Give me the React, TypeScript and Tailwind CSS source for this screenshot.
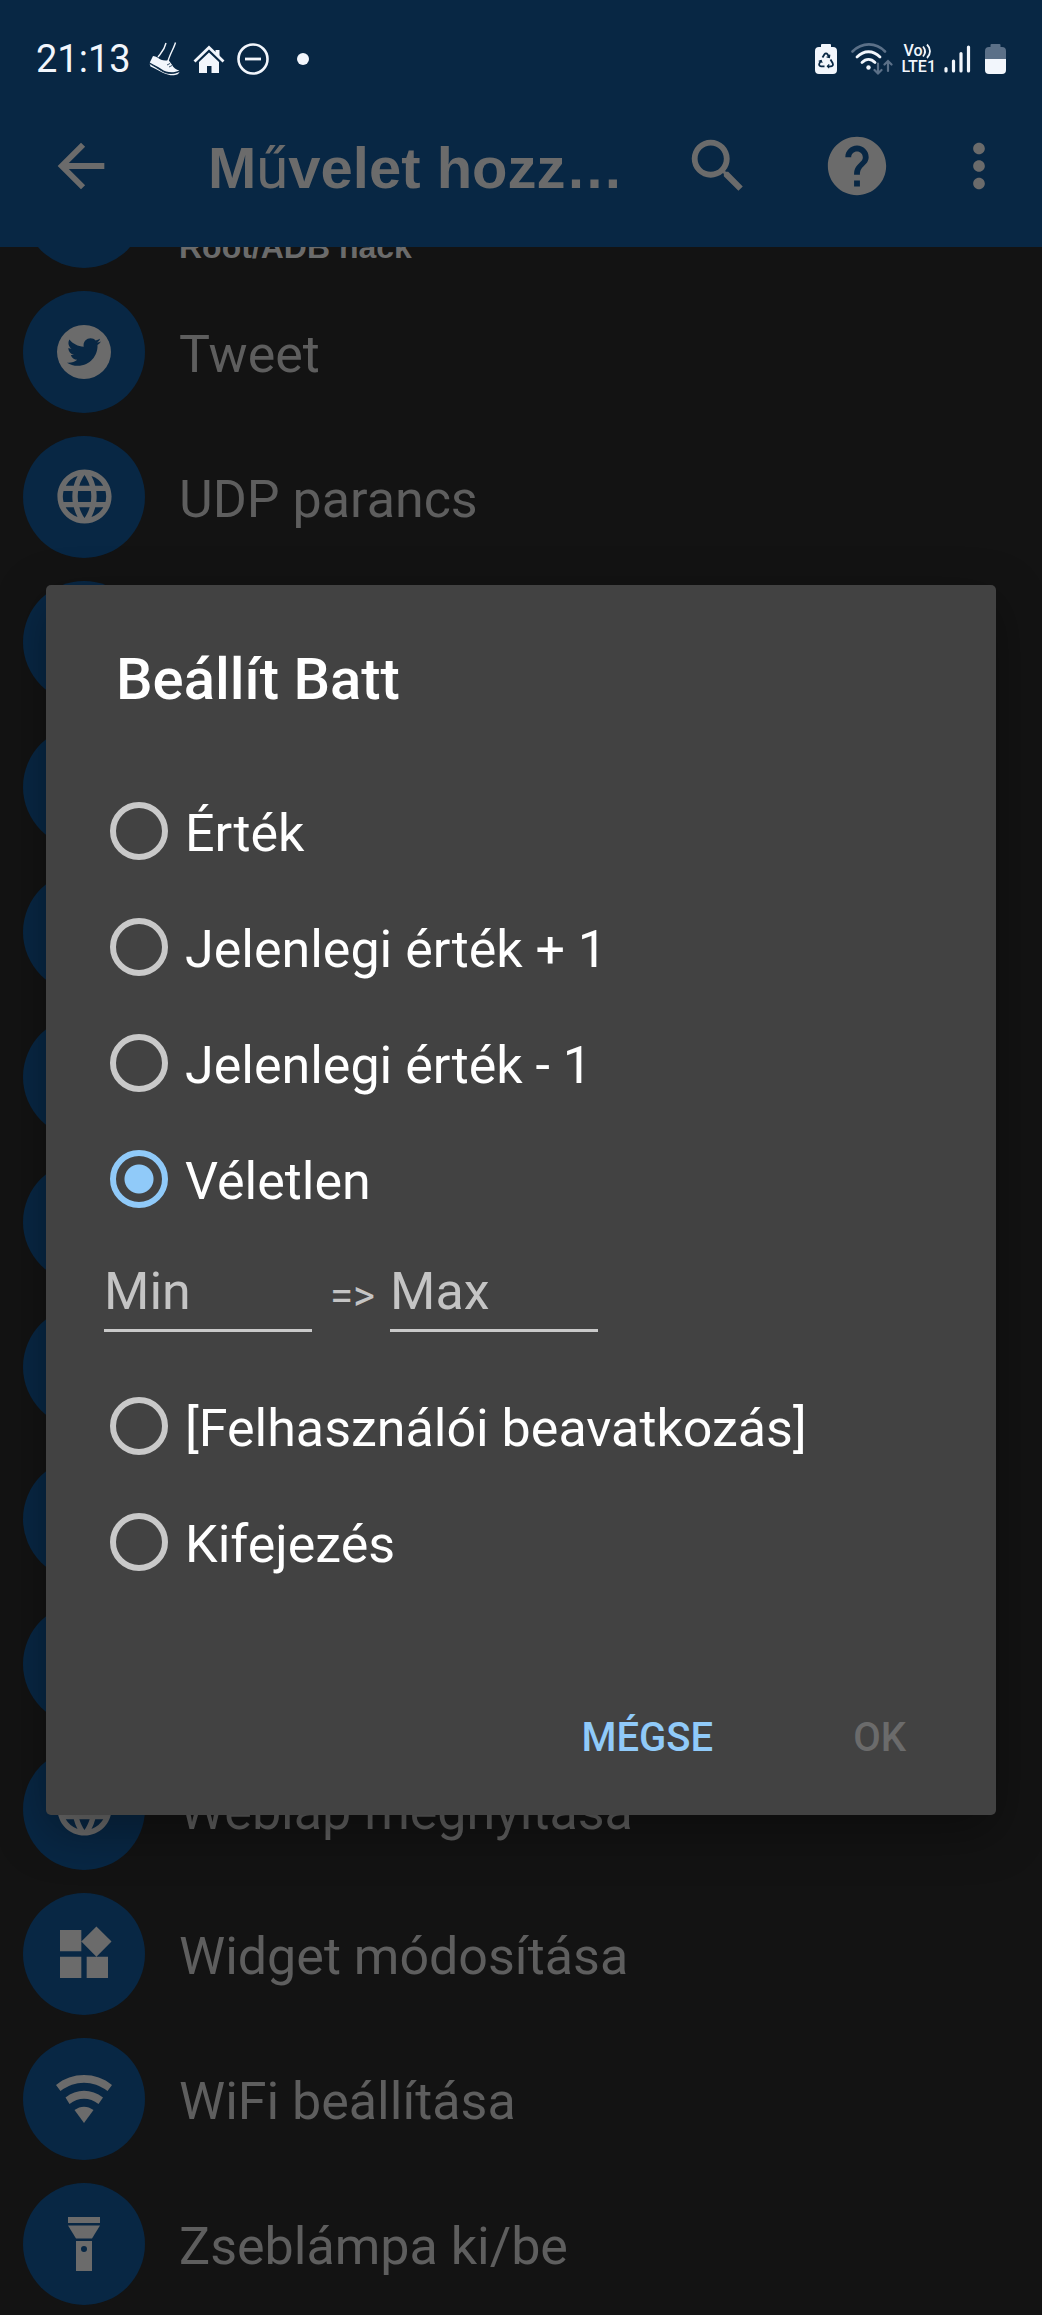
import { useState } from 'react';
import type { ReactNode } from 'react';
import { FaTwitter } from 'react-icons/fa';
import { MdArrowBack, MdHelp, MdLanguage, MdMoreVert, MdSearch, MdWidgets } from 'react-icons/md';

function ShoeIcon() {
  return (
    <svg className="h-[34px] w-8" viewBox="0 0 32 34" fill="none">
      <path d="M17 1C15.500 8 13 10 9 15" stroke="#f2f6fc" strokeWidth="1.400" />
      <path d="M26.500 0.500C25 6 21 12 19 19" stroke="#f2f6fc" strokeWidth="1.400" />
      <path
        d="M4 14L0.800 20.500c4 2.500 8 4 11.500 6.500 5 3.500 12 4.500 18 1.500-3-1-6-2.500-7.500-6L19.500 18c-4 1.500-8 0-11-2.500C7 15 5.500 14 4 14z"
        fill="#f2f6fc"
      />
      <path d="M0.500 21.500c4 2.500 8 4.500 11.500 7 5 3.500 12 4.500 18.500 1.300-.5 3-5 4-9 3.400C14 32 9 27.500 1.500 24.500z" fill="#f2f6fc" />
      <path d="M0.500 21.500c4 2.500 8 4.500 11.500 7 5 3.500 12 4 18.500 1" stroke="#082744" strokeWidth="0.800" />
      <path d="M18 23l3-1.500M20 25l3-1.500" stroke="#082744" strokeWidth="0.800" />
    </svg>
  );
}

function HouseIcon() {
  return (
    <svg className="h-7 w-8" viewBox="0 0 32 28" fill="none">
      <path d="M1.500 16.500L16 2.500 30.500 16.500" stroke="#f2f6fc" strokeWidth="2.800" />
      <path d="M22.500 5h4v7.500l-4-4z" fill="#f2f6fc" />
      <path d="M16 7.500L6 17V28h8v-7h4.500v7H26V17z" fill="#f2f6fc" />
    </svg>
  );
}

function DoNotDisturbIcon() {
  return (
    <svg className="size-8" viewBox="0 0 32 32" fill="none" stroke="#f2f6fc">
      <circle cx="16" cy="16" r="14.500" strokeWidth="2.600" />
      <path d="M8 16h16" strokeWidth="2.800" />
    </svg>
  );
}

function RecycleBatteryIcon() {
  return (
    <svg className="h-[30px] w-[22px]" viewBox="0 0 22 30">
      <path d="M7 0h8a1 1 0 0 1 1 1v2h2a4 4 0 0 1 4 4v19a4 4 0 0 1-4 4H4a4 4 0 0 1-4-4V7a4 4 0 0 1 4-4h2V1a1 1 0 0 1 1-1z" fill="#f2f6fc" />
      <g fill="none" stroke="#082744" strokeWidth="1.800">
        <path d="M7.500 13.500l2-3.200c.8-1.200 2.200-1.200 3 0l1.600 2.700" />
        <path d="M15.500 15.500l2.200 3.800c.7 1.400 0 3-1.600 3h-3.300" />
        <path d="M9.500 22.300H6c-1.600 0-2.300-1.600-1.600-3l1.600-2.800" />
        <path d="M14.800 10.600l-.4 2.900-2.800-.7M14.200 20.400l-1.800 1.900 1.800 1.800M3.700 17.300l2.500-.9.900 2.500" strokeWidth="1.200" />
      </g>
    </svg>
  );
}

function WifiStatusIcon() {
  return (
    <svg className="h-8 w-[42px]" viewBox="0 0 42 32" fill="none" strokeLinecap="round">
      <path d="M1.500 8.500C11-1 25-1 34 8.500" stroke="#5b7088" strokeWidth="2.600" />
      <path d="M6 14c7-7 16-7 23 0" stroke="#f2f6fc" strokeWidth="2.800" />
      <path d="M11 19.500c4-4 9-4 13 0" stroke="#f2f6fc" strokeWidth="2.800" />
      <circle cx="17.500" cy="24.500" r="2.200" fill="#f2f6fc" />
      <path d="M27 20.500v10M23.500 27l3.500 3.500 3.500-3.500M37 28V18M33.500 21.500L37 18l3.500 3.500" stroke="#5b7088" strokeWidth="2.200" />
    </svg>
  );
}

function SignalIcon() {
  return (
    <svg className="h-7 w-[27px]" viewBox="0 0 27 28" stroke="#f2f6fc" strokeWidth="3.200" strokeLinecap="round">
      <path d="M2 23.500v2.500M9.500 16v10M17 8.500v17.500M24.500 2v24" />
    </svg>
  );
}

function BatteryIcon() {
  return (
    <svg className="h-[30px] w-[21px]" viewBox="0 0 21 30">
      <path d="M6.500 0h8a1 1 0 0 1 1 1v2H17a4 4 0 0 1 4 4v8H0V7a4 4 0 0 1 4-4h1.500V1a1 1 0 0 1 1-1z" fill="#5b7088" />
      <path d="M0 15h21v11a4 4 0 0 1-4 4H4a4 4 0 0 1-4-4z" fill="#f2f6fc" />
    </svg>
  );
}

function TwitterIcon() {
  return (
    <span className="flex size-[54px] items-center justify-center rounded-full bg-[#6b6b6b]">
      <FaTwitter className="size-[34px] text-[#082744]" />
    </span>
  );
}

function WifiIcon() {
  return (
    <svg className="h-12 w-14" viewBox="0 0 56 48" fill="#6b6b6b">
      <path d="M0 10C16-3.300 40-3.300 56 10l-4.500 6C37 5 19 5 4.500 16z" />
      <path d="M9.500 22.500c11-9 26-9 37.500 0L42.500 29c-9-7-20-7-29 0z" />
      <path d="M18.500 35c6-4.500 13-4.500 19 0L28 48z" />
    </svg>
  );
}

function FlashlightIcon() {
  return (
    <svg className="h-[54px] w-8" viewBox="0 0 32 54" fill="#6b6b6b">
      <path d="M0 0h32v6H0z" />
      <path d="M0 8.500h32L24 21.500H8z" />
      <path fillRule="evenodd" d="M8 24h16v30H8zM16 29a3 3 0 1 0 0 6 3 3 0 0 0 0-6z" />
    </svg>
  );
}

interface Action {
  label?: string;
  icon?: ReactNode;
}

const globe = <MdLanguage className="size-[65px]" />;

const actions: Action[] = [
  { label: 'Tweet', icon: <TwitterIcon /> },
  { label: 'UDP parancs', icon: globe },
  {},
  {},
  {},
  {},
  {},
];

const moreActions: Action[] = [
  {},
  {},
  { label: 'Weblap megnyitása', icon: globe },
  { label: 'Widget módosítása', icon: <MdWidgets className="size-16" /> },
  { label: 'WiFi beállítása', icon: <WifiIcon /> },
  { label: 'Zseblámpa ki/be', icon: <FlashlightIcon /> },
];

function ActionRow({ label, icon }: Action) {
  return (
    <li className="flex h-[145px] shrink-0 items-center gap-[34px] pl-[23px]">
      <span className="flex size-[122px] shrink-0 items-center justify-center rounded-full bg-[#082744] text-[#6b6b6b]">
        {icon}
      </span>
      <span className="pt-1.5 text-[52px] leading-[60px] text-[#5e5e5e]">{label}</span>
    </li>
  );
}

interface OptionProps {
  value: string;
  label: string;
  selected: string;
  onSelect: (value: string) => void;
}

function Option({ value, label, selected, onSelect }: OptionProps) {
  return (
    <label className="flex h-[116px] items-center gap-[17px] pl-16">
      <input
        type="radio"
        name="mode"
        value={value}
        checked={selected === value}
        onChange={() => onSelect(value)}
        className="size-[58px] shrink-0 appearance-none rounded-full border-[6px] border-[#c9c9c9] checked:border-[#90caf9] checked:bg-[radial-gradient(circle,#90caf9_14px,transparent_15px)]"
      />
      <span className="pt-1.5 text-[52px] leading-[60px] text-white">{label}</span>
    </label>
  );
}

export default function App() {
  const [mode, setMode] = useState('random');
  const [min, setMin] = useState('');
  const [max, setMax] = useState('');

  const fieldClass =
    'h-[78px] w-[208px] border-b-[3px] border-[#c9c9c9] bg-transparent text-[52px] text-white outline-none placeholder:text-[#c4c4c4]';

  return (
    <div className="relative h-screen overflow-hidden bg-[#131313] font-[Roboto,sans-serif]">
      <header className="relative z-10 bg-[#082744] pb-[46px]">
        <div className="flex h-[118px] items-center justify-between pr-9 pl-9 text-[#f2f6fc]">
          <div className="flex items-center gap-3">
            <span className="mr-1.5 text-[38px] leading-[44px]">21:13</span>
            <ShoeIcon />
            <HouseIcon />
            <DoNotDisturbIcon />
            <span className="ml-4 size-3 rounded-full bg-[#f2f6fc]" />
          </div>
          <div className="flex items-center gap-3.5">
            <RecycleBatteryIcon />
            <div className="flex items-center gap-2">
              <WifiStatusIcon />
              <div className="flex flex-col text-base leading-4 font-medium">
                <span className="flex items-center pl-0.5">
                  Vo
                  <svg className="h-4 w-2.5" viewBox="0 0 10 16" fill="none" stroke="#f2f6fc" strokeWidth="1.800">
                    <path d="M1 3.500c2.500 3 2.500 7 0 10M5 1.500c4 4 4 9.500 0 13.500" />
                  </svg>
                </span>
                <span>LTE1</span>
              </div>
              <SignalIcon />
            </div>
            <BatteryIcon />
          </div>
        </div>
        <div className="flex h-[83px] items-center pt-3 pr-7 pl-[46px] text-[#6b6b6b]">
          <button type="button" aria-label="Vissza">
            <MdArrowBack className="size-[70px]" />
          </button>
          <h1 className="ml-[92px] flex-1 pt-1 font-['Liberation_Sans',sans-serif] text-[58px] leading-[70px] font-bold whitespace-nowrap">
            M<span className="font-[Roboto,sans-serif] font-normal">ű</span>velet hozz…
          </h1>
          <div className="flex items-center">
            <button type="button" aria-label="Keresés">
              <MdSearch className="size-[70px]" />
            </button>
            <button type="button" aria-label="Súgó" className="ml-[69px]">
              <MdHelp className="size-[70px]" />
            </button>
            <button type="button" aria-label="Menü" className="ml-[52px]">
              <MdMoreVert className="size-[70px]" />
            </button>
          </div>
        </div>
      </header>

      {/* the list is scrolled under the header */}
      <ul className="-mt-[113px] flex flex-col">
        <li className="flex h-[145px] shrink-0 items-center gap-[34px] pl-[23px]">
          <span className="size-[122px] shrink-0 rounded-full bg-[#082744]" />
          <span className="self-end pb-3 font-['Liberation_Sans',sans-serif] text-[32px] leading-10 font-bold text-[#6b6b6b]">
            Root/ADB hack
          </span>
        </li>
        {actions.map((action, i) => (
          <ActionRow key={i} {...action} />
        ))}
      </ul>
      <ul className="flex flex-col">
        <li className="h-[152px] pt-3 pl-[23px]">
          <span className="block size-[122px] rounded-full bg-[#082744]" />
        </li>
        {moreActions.map((action, i) => (
          <ActionRow key={i} {...action} />
        ))}
      </ul>

      <div className="absolute inset-x-0 top-[585px] z-20 px-[46px]">
        <form
          role="dialog"
          aria-labelledby="dialog-title"
          onSubmit={(e) => e.preventDefault()}
          className="rounded-[5px] bg-[#424242] pb-9 shadow-[0_16px_50px_rgba(0,0,0,0.35)]"
        >
          <h2 id="dialog-title" className="px-[70px] pt-[60px] text-[58px] leading-[68px] font-medium text-white">
            Beállít Batt
          </h2>

          <div className="pt-[60px]">
            <Option value="value" label="Érték" selected={mode} onSelect={setMode} />
            <Option value="plus" label="Jelenlegi érték + 1" selected={mode} onSelect={setMode} />
            <Option value="minus" label="Jelenlegi érték - 1" selected={mode} onSelect={setMode} />
            <Option value="random" label="Véletlen" selected={mode} onSelect={setMode} />
            <div className="flex items-center pt-[17px] pb-9 pl-[58px]">
              <input aria-label="Min" placeholder="Min" value={min} onChange={(e) => setMin(e.target.value)} className={fieldClass} />
              <span className="w-[78px] pt-1.5 pl-[18px] text-[42px] leading-[50px] text-[#c4c4c4]">=&gt;</span>
              <input aria-label="Max" placeholder="Max" value={max} onChange={(e) => setMax(e.target.value)} className={fieldClass} />
            </div>
            <Option value="user" label="[Felhasználói beavatkozás]" selected={mode} onSelect={setMode} />
            <Option value="expression" label="Kifejezés" selected={mode} onSelect={setMode} />
          </div>

          <div className="flex justify-end gap-[132px] pt-[97px] pr-[86px] text-[40px] font-medium">
            <button type="button" className="h-[82px] px-1 text-[#90caf9]">
              MÉGSE
            </button>
            <button type="submit" disabled={!min || !max} className="h-[82px] px-1 text-[#90caf9] disabled:text-[#6b6b6b]">
              OK
            </button>
          </div>
        </form>
      </div>
    </div>
  );
}
